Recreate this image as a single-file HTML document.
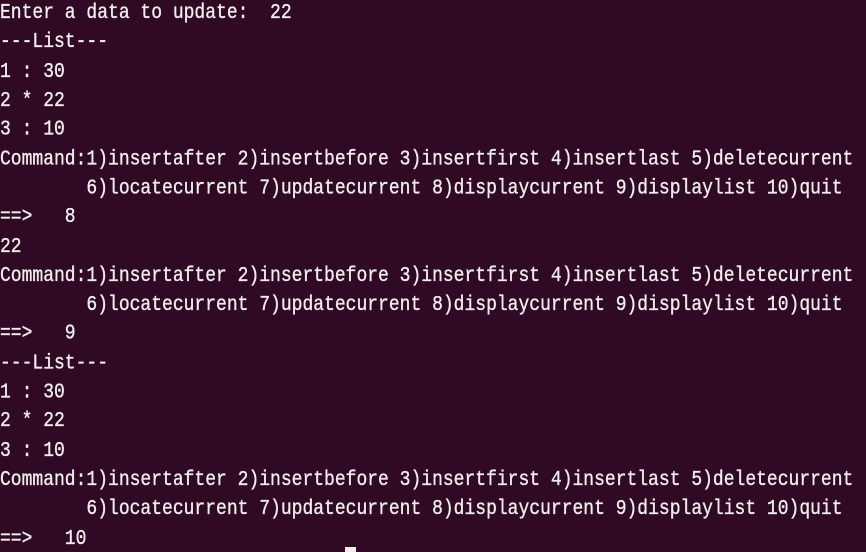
<!DOCTYPE html>
<html><head><style>
html,body{margin:0;padding:0;background:#300a24;width:866px;height:552px;overflow:hidden;position:relative}
pre{margin:0;position:absolute;left:0;top:-1px;font-family:"Liberation Mono",monospace;font-size:18px;line-height:24.31px;color:#eeeeec;white-space:pre;transform:scaleY(1.2);transform-origin:0 0;-webkit-text-stroke:0.3px #eeeeec}
.cur{position:absolute;left:345px;top:547px;width:11px;height:5px;background:#eeeeec}
</style></head><body>
<pre>Enter a data to update:  22
---List---
1 : 30
2 * 22
3 : 10
Command:1)insertafter 2)insertbefore 3)insertfirst 4)insertlast 5)deletecurrent
        6)locatecurrent 7)updatecurrent 8)displaycurrent 9)displaylist 10)quit
==>   8
22
Command:1)insertafter 2)insertbefore 3)insertfirst 4)insertlast 5)deletecurrent
        6)locatecurrent 7)updatecurrent 8)displaycurrent 9)displaylist 10)quit
==>   9
---List---
1 : 30
2 * 22
3 : 10
Command:1)insertafter 2)insertbefore 3)insertfirst 4)insertlast 5)deletecurrent
        6)locatecurrent 7)updatecurrent 8)displaycurrent 9)displaylist 10)quit
==>   10</pre>
<div class="cur"></div>
</body></html>
